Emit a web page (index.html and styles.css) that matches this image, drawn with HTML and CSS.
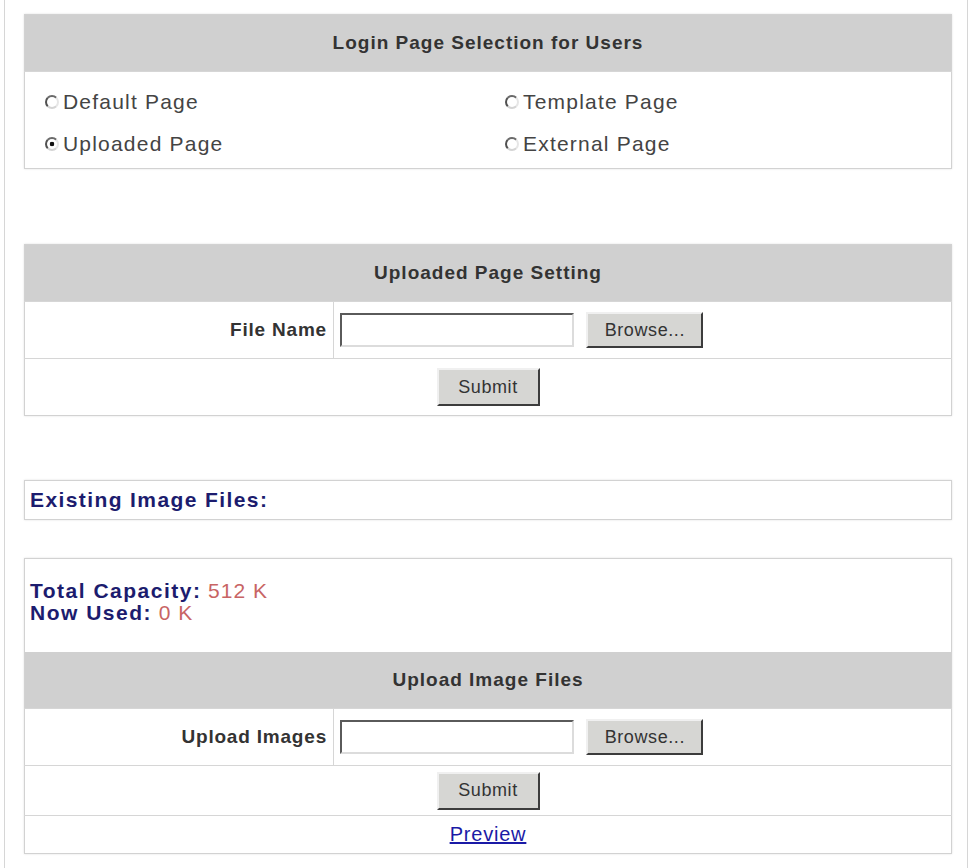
FILE: index.html
```html
<!DOCTYPE html>
<html lang="en">
<head>
  <meta charset="UTF-8" />
  <title>Login Page Selection</title>
  <link rel="stylesheet" href="styles.css">
</head>
<body>

  <div class="page">

    <table class="box box-login">
      <tr>
        <th colspan="2">Login Page Selection for Users</th>
      </tr>
      <tr>
        <td class="choices" colspan="2">
          <div class="choice-grid">
            <label><input type="radio" name="page" /> Default Page</label>
            <label><input type="radio" name="page" /> Template Page</label>
            <label><input type="radio" name="page" checked /> Uploaded Page</label>
            <label><input type="radio" name="page" /> External Page</label>
          </div>
        </td>
      </tr>
    </table>

    <table class="box box-upload">
      <tr>
        <th colspan="2">Uploaded Page Setting</th>
      </tr>
      <tr class="file-row">
        <td class="label">File Name</td>
        <td class="field">
          <input type="text" class="file-text" />
          <input type="button" class="btn btn-browse" value="Browse..." />
        </td>
      </tr>
      <tr class="submit-row">
        <td colspan="2"><input type="button" class="btn btn-submit" value="Submit" /></td>
      </tr>
    </table>

    <div class="existing">Existing Image Files:</div>

    <table class="box box-images">
      <tr>
        <td class="capacity" colspan="2">
          <div><b>Total Capacity:</b> <span class="num">512 K</span></div>
          <div><b>Now Used:</b> <span class="num">0 K</span></div>
        </td>
      </tr>
      <tr>
        <th colspan="2">Upload Image Files</th>
      </tr>
      <tr class="file-row">
        <td class="label">Upload Images</td>
        <td class="field">
          <input type="text" class="file-text" />
          <input type="button" class="btn btn-browse" value="Browse..." />
        </td>
      </tr>
      <tr class="submit-row short">
        <td colspan="2"><input type="button" class="btn btn-submit" value="Submit" /></td>
      </tr>
      <tr class="preview-row">
        <td colspan="2"><a href="#">Preview</a></td>
      </tr>
    </table>

  </div>

</body>
</html>
```

FILE: styles.css
```css
body {
  margin: 0;
  background-color: #ffffff;
  font-family: "Liberation Sans", Arial, sans-serif;
  font-size: 20px;
  letter-spacing: 0.8px;
  color: #444;
}

.page {
  margin-left: 4px;
  width: 928px;
  min-height: 868px;
  padding: 14px 15px 0 19px;
  border-left: 1px solid #d6d6d6;
  border-right: 1px solid #d6d6d6;
  box-sizing: content-box;
}

.box {
  width: 928px;
  border-collapse: collapse;
  border: 1px solid #d2d2d2;
  box-shadow: 0 0 2px rgba(0,0,0,0.12);
}

.box th {
  height: 56px;
  padding: 0;
  background-color: #d0d0d0;
  color: #333;
  font-size: 19px;
  letter-spacing: 1px;
  font-weight: bold;
  text-align: center;
}

.box td {
  padding: 0;
  border-top: 1px solid #d6d6d6;
}

.choices {
  padding: 9px 0 3px !important;
}

.choice-grid {
  display: grid;
  grid-template-columns: 1fr 1fr;
}

.choice-grid label {
  display: flex;
  align-items: center;
  gap: 4px;
  height: 42px;
  padding-left: 20px;
  font-size: 21px;
  letter-spacing: 1.2px;
  color: #444;
}

.choice-grid label:nth-child(even) {
  padding-left: 17px;
}

input[type="radio"] {
  appearance: none;
  -webkit-appearance: none;
  flex: none;
  width: 14px;
  height: 14px;
  margin: 0;
  border-radius: 50%;
  border: 2px solid;
  border-color: #6a6a6a #e6e6e6 #d4d4d4 #505050;
  background-color: #fff;
}

input[type="radio"]:checked {
  background: radial-gradient(circle, #111 0 2px, #fff 2.6px);
}

.box-upload {
  margin-top: 75px;
}

.file-row td {
  height: 56px;
}

.label {
  width: 302px;
  padding-right: 6px !important;
  text-align: right;
  font-weight: bold;
  font-size: 19px;
  color: #333;
  border-right: 1px solid #d6d6d6;
}

.field {
  padding-left: 6px !important;
}

.field input {
  vertical-align: middle;
}

.file-text {
  width: 234px;
  height: 34px;
  box-sizing: border-box;
  margin: 0;
  border: 2px solid;
  border-color: #5a5a5a #dcdcdc #dcdcdc #5a5a5a;
  background: #fff;
}

.btn {
  box-sizing: border-box;
  margin: 0;
  padding: 0;
  font-family: "Liberation Sans", Arial, sans-serif;
  font-size: 18px;
  letter-spacing: 0.6px;
  color: #333;
  background-color: #d6d6d3;
  border: 2px solid;
  border-color: #f0f0f0 #3c3c3c #3c3c3c #f0f0f0;
  cursor: pointer;
}

.btn-browse {
  width: 117px;
  height: 36px;
  margin-left: 6px;
}

.btn-submit {
  width: 103px;
  height: 38px;
}

.submit-row td {
  height: 56px;
  text-align: center;
}

.submit-row.short td {
  height: 49px;
}

.existing {
  margin-top: 64px;
  height: 38px;
  line-height: 38px;
  padding-left: 5px;
  border: 1px solid #d2d2d2;
  box-shadow: 0 0 2px rgba(0,0,0,0.12);
  color: #1c1c6e;
  font-weight: bold;
  font-size: 21px;
  letter-spacing: 1.4px;
}

.box-images {
  margin-top: 38px;
}

.box-images .capacity {
  border-top: none;
  padding: 21px 5px 28px !important;
  line-height: 22px;
  font-size: 21px;
  color: #1c1c6e;
}

.capacity b {
  letter-spacing: 1.5px;
}

.num {
  color: #c86464;
  letter-spacing: 1px;
}

.preview-row td {
  height: 37px;
  text-align: center;
}

.preview-row a {
  color: #1a1aa6;
}
```
